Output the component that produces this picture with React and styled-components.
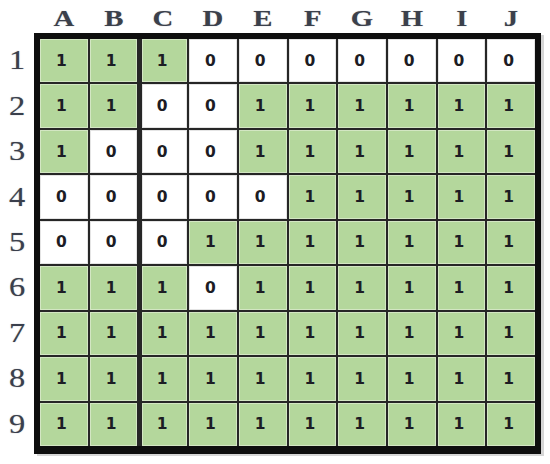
import React from "react";
import styled, { createGlobalStyle } from "styled-components";

const GlobalStyle = createGlobalStyle`
  html, body { margin: 0; padding: 0; background: #ffffff; }
  body { width: 550px; height: 464px; overflow: hidden; }
`;

const COLS = ["A", "B", "C", "D", "E", "F", "G", "H", "I", "J"];
const DATA = [
  "1110000000",
  "1100111111",
  "1000111111",
  "0000011111",
  "0001111111",
  "1110111111",
  "1111111111",
  "1111111111",
  "1111111111",
];

const Page = styled.div`
  display: grid;
  grid-template-columns: 34px 507px;
  grid-template-rows: 33px 421px;
`;

const Corner = styled.div``;

const ColHeader = styled.div`
  display: grid;
  grid-template-columns: repeat(10, 1fr);
  column-gap: 2px;
  padding: 0 6px;
  align-items: end;
`;

const ColLabel = styled.div`
  font-family: "Liberation Serif", "DejaVu Serif", serif;
  font-weight: bold;
  font-size: 23px;
  line-height: 1;
  color: #3b404b;
  text-align: center;
  padding-bottom: 3px;
  transform: scaleX(1.25);
  text-shadow: 0 0 1px rgba(59, 64, 75, 0.45);
`;

const RowHeader = styled.div`
  display: grid;
  grid-template-rows: repeat(9, 1fr);
  row-gap: 2px;
  padding: 6px 0 8px;
`;

const RowLabel = styled.div`
  display: flex;
  align-items: center;
  justify-content: center;
  font-family: "Liberation Serif", "DejaVu Serif", serif;
  font-size: 27px;
  line-height: 1;
  color: #3a3f4c;
  transform: scaleX(1.2);
  text-shadow: 0 0 1px rgba(58, 63, 76, 0.5);
`;

const Board = styled.div`
  display: grid;
  grid-template-columns: repeat(10, 1fr);
  grid-template-rows: repeat(9, 1fr);
  gap: 2px;
  background: #262626;
  border: 6px solid #0e0e0e;
  border-bottom-width: 8px;
  box-shadow: 3px 2px 0 #d6d6d6;
`;

const Cell = styled.div`
  display: flex;
  align-items: center;
  justify-content: center;
  padding-right: 5px;
  margin-left: ${(p) => (p.$thick ? "3px" : "0")};
  background: ${(p) => (p.$on ? "#b4d79c" : "#ffffff")};
  box-shadow: inset 0 0 0 1px
    ${(p) => (p.$on ? "rgba(214, 232, 200, 0.9)" : "rgba(225, 225, 225, 0.9)")};
  font-family: "DejaVu Sans", "Liberation Sans", sans-serif;
  font-weight: bold;
  font-size: 15.5px;
  color: #1c1c24;
`;

export default function App() {
  return (
    <>
      <GlobalStyle />
      <Page>
        <Corner />
        <ColHeader>
          {COLS.map((c) => (
            <ColLabel key={c}>{c}</ColLabel>
          ))}
        </ColHeader>
        <RowHeader>
          {DATA.map((_, i) => (
            <RowLabel key={i}>{i + 1}</RowLabel>
          ))}
        </RowHeader>
        <Board>
          {DATA.map((row, r) =>
            row.split("").map((v, c) => (
              <Cell key={`${r}-${c}`} $on={v === "1"} $thick={c === 2}>
                {v}
              </Cell>
            ))
          )}
        </Board>
      </Page>
    </>
  );
}
